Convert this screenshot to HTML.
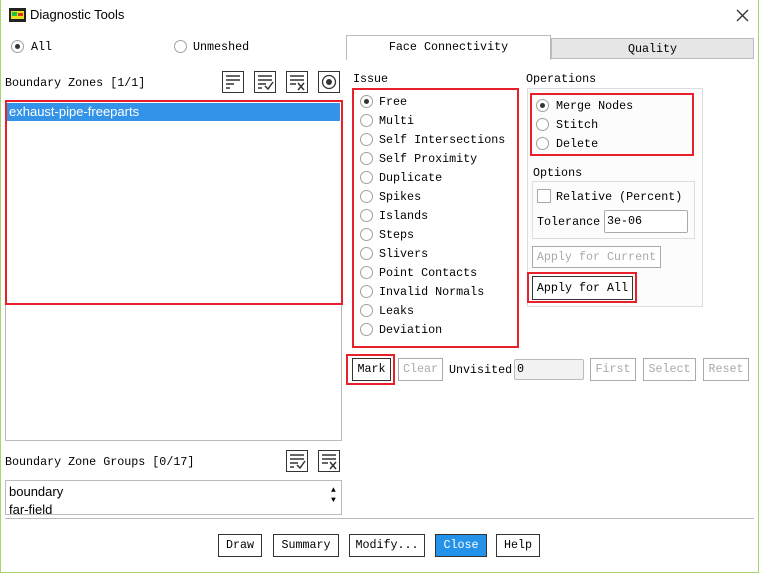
<!DOCTYPE html>
<html><head><style>
*{margin:0;padding:0;box-sizing:border-box}
body{width:759px;height:573px;position:relative;background:#fff;overflow:hidden;font-family:"Liberation Mono",monospace;font-size:11.7px;color:#000}
.a{position:absolute;white-space:nowrap}
.t{line-height:14px}
.rb{position:absolute;width:13px;height:13px;border:1px solid #a0a0a0;border-radius:50%;background:#fff}
.rb.on::after{content:"";position:absolute;left:3px;top:3px;width:5px;height:5px;border-radius:50%;background:#333}
.btn{position:absolute;border:1px solid #333;background:#fff;text-align:center;line-height:20px;font-size:11.7px}
.dis{border-color:#aaa;color:#aaa}
.red{position:absolute;border:2px solid #e8202a}
.ic{position:absolute;width:22px;height:22px;border:1px solid #333;background:#fff}
</style></head><body>
<div class="a" style="left:0;top:0;width:1px;height:573px;background:#a8d46f"></div>
<div class="a" style="right:0;top:0;width:1px;height:573px;background:#a8d46f"></div>
<div class="a" style="left:0;bottom:0;width:759px;height:1px;background:#a8d46f"></div>
<svg class="a" style="left:9px;top:8px" width="17" height="14"><rect width="17" height="14" fill="#222"/><rect x="2" y="3" width="13" height="8" fill="#e8e020"/><rect x="3" y="4" width="5" height="4" fill="#20c040"/><rect x="9" y="5" width="5" height="3" fill="#e03020"/></svg>
<div class="a" style="left:30px;top:7px;font-family:'Liberation Sans',sans-serif;font-size:13px">Diagnostic Tools</div>
<svg class="a" style="left:736px;top:9px" width="13" height="13"><path d="M1 1L12 12M12 1L1 12" stroke="#333" stroke-width="1.3"/></svg>

<div class="rb on" style="left:11px;top:40px"></div><div class="a t" style="left:31px;top:40px">All</div>
<div class="rb" style="left:174px;top:40px"></div><div class="a t" style="left:193px;top:40px">Unmeshed</div>

<div class="a" style="left:346px;top:35px;width:205px;height:25px;border:1px solid #bbb;border-bottom:none;background:#fff;text-align:center;line-height:23px">Face Connectivity</div>
<div class="a" style="left:551px;top:38px;width:203px;height:21px;border:1px solid #bbb;background:#e6e6e6;text-align:center;line-height:20px">Quality</div>

<div class="a t" style="left:5px;top:76px">Boundary Zones [1/1]</div>
<div class="ic" style="left:222px;top:71px"><svg width="20" height="20"><path d="M3 4H17M3 8H17M3 12H11M3 16H7" stroke="#333" stroke-width="1.5"/></svg></div>
<div class="ic" style="left:254px;top:71px"><svg width="20" height="20"><path d="M3 4H17M3 8H17M3 12H11M3 16H7M10 14L13 17L18 10" stroke="#333" stroke-width="1.5" fill="none"/></svg></div>
<div class="ic" style="left:286px;top:71px"><svg width="20" height="20"><path d="M3 4H17M3 8H17M3 12H9M11 11L17 18M17 11L11 18" stroke="#333" stroke-width="1.5" fill="none"/></svg></div>
<div class="ic" style="left:318px;top:71px"><svg width="20" height="20"><circle cx="10" cy="10" r="6.5" stroke="#333" stroke-width="1.3" fill="none"/><circle cx="10" cy="10" r="3" fill="#333"/></svg></div>

<div class="a" style="left:5px;top:100px;width:337px;height:341px;border:1px solid #bbb"></div>
<div class="a" style="left:7px;top:103px;width:333px;height:18px;background:#3393e8;color:#fff;font-family:'Liberation Sans',sans-serif;font-size:13px;line-height:18px;padding-left:2px">exhaust-pipe-freeparts</div>
<div class="red" style="left:5px;top:100px;width:338px;height:205px"></div>

<div class="a t" style="left:5px;top:455px">Boundary Zone Groups [0/17]</div>
<div class="ic" style="left:286px;top:450px"><svg width="20" height="20"><path d="M3 4H17M3 8H17M3 12H11M3 16H7M10 14L13 17L18 10" stroke="#333" stroke-width="1.5" fill="none"/></svg></div>
<div class="ic" style="left:318px;top:450px"><svg width="20" height="20"><path d="M3 4H17M3 8H17M3 12H9M11 11L17 18M17 11L11 18" stroke="#333" stroke-width="1.5" fill="none"/></svg></div>
<div class="a" style="left:5px;top:480px;width:337px;height:35px;border:1px solid #bbb;overflow:hidden;font-family:'Liberation Sans',sans-serif;font-size:13px;line-height:18px;padding:2px 0 0 3px">boundary<br>far-field</div>
<div class="a" style="left:331px;top:486px;font-size:8px;line-height:10px">▲<br>▼</div>
<div class="a" style="left:5px;top:518px;width:749px;height:1px;background:#bbb"></div>

<div class="btn" style="left:218px;top:534px;width:44px;height:23px">Draw</div>
<div class="btn" style="left:273px;top:534px;width:66px;height:23px">Summary</div>
<div class="btn" style="left:349px;top:534px;width:76px;height:23px">Modify...</div>
<div class="btn" style="left:435px;top:534px;width:52px;height:23px;background:#2592ea;color:#fff">Close</div>
<div class="btn" style="left:496px;top:534px;width:44px;height:23px">Help</div>

<div class="a t" style="left:353px;top:72px">Issue</div>
<div class="red" style="left:352px;top:88px;width:167px;height:260px"></div>
<div class="rb on" style="left:360px;top:95px"></div><div class="a t" style="left:379px;top:95px">Free</div>
<div class="rb" style="left:360px;top:114px"></div><div class="a t" style="left:379px;top:114px">Multi</div>
<div class="rb" style="left:360px;top:133px"></div><div class="a t" style="left:379px;top:133px">Self Intersections</div>
<div class="rb" style="left:360px;top:152px"></div><div class="a t" style="left:379px;top:152px">Self Proximity</div>
<div class="rb" style="left:360px;top:171px"></div><div class="a t" style="left:379px;top:171px">Duplicate</div>
<div class="rb" style="left:360px;top:190px"></div><div class="a t" style="left:379px;top:190px">Spikes</div>
<div class="rb" style="left:360px;top:209px"></div><div class="a t" style="left:379px;top:209px">Islands</div>
<div class="rb" style="left:360px;top:228px"></div><div class="a t" style="left:379px;top:228px">Steps</div>
<div class="rb" style="left:360px;top:247px"></div><div class="a t" style="left:379px;top:247px">Slivers</div>
<div class="rb" style="left:360px;top:266px"></div><div class="a t" style="left:379px;top:266px">Point Contacts</div>
<div class="rb" style="left:360px;top:285px"></div><div class="a t" style="left:379px;top:285px">Invalid Normals</div>
<div class="rb" style="left:360px;top:304px"></div><div class="a t" style="left:379px;top:304px">Leaks</div>
<div class="rb" style="left:360px;top:323px"></div><div class="a t" style="left:379px;top:323px">Deviation</div>

<div class="a t" style="left:526px;top:72px">Operations</div>
<div class="a" style="left:527px;top:88px;width:176px;height:219px;border:1px solid #ddd;background:#fcfcfc"></div>
<div class="red" style="left:530px;top:93px;width:164px;height:63px"></div>
<div class="rb on" style="left:536px;top:99px"></div><div class="a t" style="left:556px;top:99px">Merge Nodes</div>
<div class="rb" style="left:536px;top:118px"></div><div class="a t" style="left:556px;top:118px">Stitch</div>
<div class="rb" style="left:536px;top:137px"></div><div class="a t" style="left:556px;top:137px">Delete</div>
<div class="a t" style="left:533px;top:166px">Options</div>
<div class="a" style="left:532px;top:181px;width:163px;height:58px;border:1px solid #ddd"></div>
<div class="a" style="left:537px;top:189px;width:14px;height:14px;border:1px solid #aaa;background:#fff"></div>
<div class="a t" style="left:556px;top:190px">Relative (Percent)</div>
<div class="a t" style="left:537px;top:215px">Tolerance</div>
<div class="a" style="left:604px;top:210px;width:84px;height:23px;border:1px solid #aaa;border-radius:2px;background:#fff;line-height:21px;padding-left:2px">3e-06</div>
<div class="btn dis" style="left:532px;top:246px;width:129px;height:22px">Apply for Current</div>
<div class="red" style="left:527px;top:272px;width:110px;height:31px"></div>
<div class="btn" style="left:532px;top:276px;width:101px;height:24px;line-height:22px">Apply for All</div>

<div class="red" style="left:346px;top:354px;width:49px;height:31px"></div>
<div class="btn" style="left:352px;top:358px;width:39px;height:23px">Mark</div>
<div class="btn dis" style="left:398px;top:358px;width:45px;height:23px">Clear</div>
<div class="a t" style="left:449px;top:363px">Unvisited</div>
<div class="a" style="left:514px;top:359px;width:70px;height:21px;border:1px solid #bbb;border-radius:2px;background:#f2f2f2;line-height:19px;padding-left:2px">0</div>
<div class="btn dis" style="left:590px;top:358px;width:46px;height:23px">First</div>
<div class="btn dis" style="left:643px;top:358px;width:53px;height:23px">Select</div>
<div class="btn dis" style="left:703px;top:358px;width:46px;height:23px">Reset</div>
</body></html>
